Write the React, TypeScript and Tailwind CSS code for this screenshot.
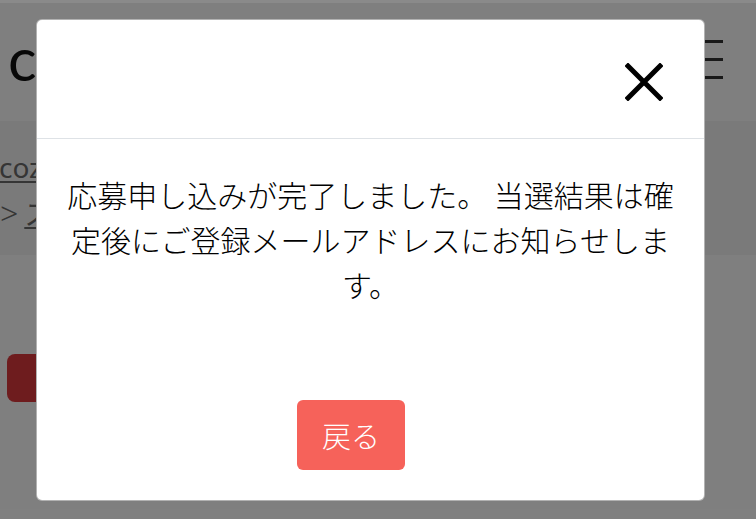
import React from "react";

export default function App() {
  return (
    <div className="relative w-[756px] h-[519px] overflow-hidden bg-white" style={{ fontFamily: '"Noto Sans CJK JP", "Noto Sans", sans-serif' }}>
      {/* underlying page */}
      <div className="flex flex-col">
        <header className="h-[121px] flex items-center justify-between pl-[8px] pr-[33px]">
          <span className="text-[60px] leading-none text-[#111] font-normal mt-[-6px]" style={{ fontFamily: 'Lato, sans-serif' }}>cozre</span>
          <div className="flex flex-col gap-[15px] w-[30px] mt-[-2px]">
            <span className="block h-[3px] bg-[#333]" />
            <span className="block h-[3px] bg-[#333]" />
            <span className="block h-[3px] bg-[#333]" />
          </div>
        </header>
        <div className="h-[134px] bg-[#f5f5f5] pt-[24px] text-[28px] leading-[45px] text-[#6a6a6a]" style={{ fontFamily: '"Noto Sans", "Noto Sans CJK JP", sans-serif' }}>
          <div className="-ml-[1px]"><span className="underline underline-offset-[3px]">cozre</span></div>
          <div className="flex gap-[6px] items-baseline"><span className="text-[32px] font-light">&gt;</span><span className="underline" style={{ fontFamily: '"Noto Sans CJK JP", sans-serif' }}>スポーツ</span></div>
        </div>
        <div className="pt-[99px] pl-[7px]">
          <div className="w-[200px] h-[48px] rounded-[8px] bg-[#dc393c]" />
        </div>
      </div>

      {/* overlay */}
      <div className="absolute inset-0 bg-black/50" />
      <div className="absolute left-0 top-0 w-full h-[3px] bg-[#8a8a8a]" />

      {/* modal */}
      <div className="absolute left-[36px] top-[19px] w-[669px] h-[482px] bg-white rounded-[6px] border border-black/30 flex flex-col overflow-hidden">
        <div className="h-[119px] shrink-0 border-b border-[#dee2e6] flex items-center justify-end pr-[41px] pt-[6px]">
          <svg width="38" height="38" viewBox="0 0 38 38">
            <path d="M3 3 L35 35 M35 3 L3 35" stroke="#000" strokeWidth="5" strokeLinecap="square" fill="none" />
          </svg>
        </div>
        <div className="flex-1 px-[24px] pt-[33px] text-center text-[30px] leading-[45px] text-black font-light">
          応募申し込みが完了しました。 当選結果は確定後にご登録メールアドレスにお知らせします。
        </div>
        <div className="flex justify-center pb-[30px] pr-[39px]">
          <button className="w-[108px] h-[70px] rounded-[6px] bg-[#f6625a] text-white text-[29px] leading-none font-light">戻る</button>
        </div>
      </div>
    </div>
  );
}
